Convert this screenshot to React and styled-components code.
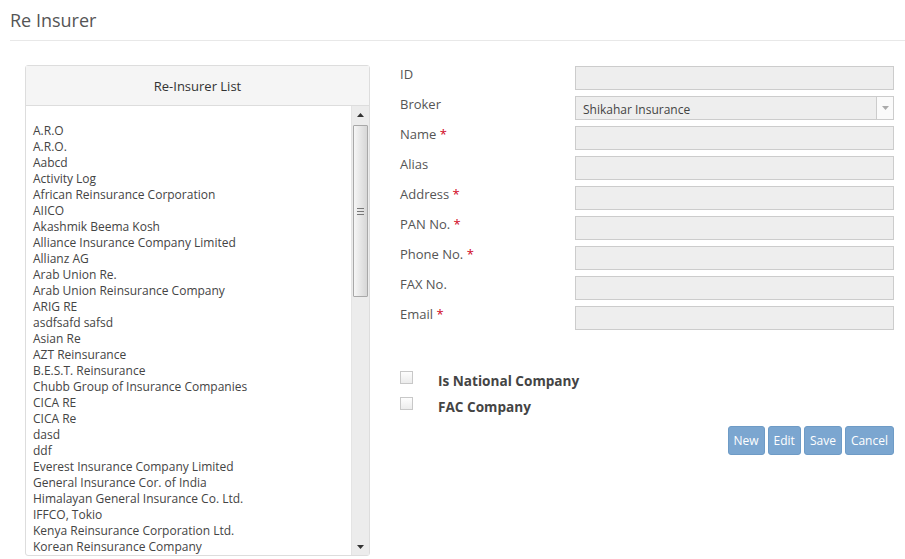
import styled, { createGlobalStyle } from "styled-components";

const GlobalStyle = createGlobalStyle`
  html, body {
    margin: 0;
    padding: 0;
    background: #fff;
  }
  body {
    font-family: "Open Sans", "Liberation Sans", sans-serif;
    color: #555;
  }
`;

const reinsurers = [
  "A.R.O",
  "A.R.O.",
  "Aabcd",
  "Activity Log",
  "African Reinsurance Corporation",
  "AIICO",
  "Akashmik Beema Kosh",
  "Alliance Insurance Company Limited",
  "Allianz AG",
  "Arab Union Re.",
  "Arab Union Reinsurance Company",
  "ARIG RE",
  "asdfsafd safsd",
  "Asian Re",
  "AZT Reinsurance",
  "B.E.S.T. Reinsurance",
  "Chubb Group of Insurance Companies",
  "CICA RE",
  "CICA Re",
  "dasd",
  "ddf",
  "Everest Insurance Company Limited",
  "General Insurance Cor. of India",
  "Himalayan General Insurance Co. Ltd.",
  "IFFCO, Tokio",
  "Kenya Reinsurance Corporation Ltd.",
  "Korean Reinsurance Company",
];

const fields = [
  { label: "ID" },
  { label: "Broker", select: "Shikahar Insurance" },
  { label: "Name", required: true },
  { label: "Alias" },
  { label: "Address", required: true },
  { label: "PAN No.", required: true },
  { label: "Phone No.", required: true },
  { label: "FAX No." },
  { label: "Email", required: true },
];

const Page = styled.div`
  width: 905px;
  height: 559px;
  overflow: hidden;
`;

const PageHeader = styled.div`
  margin-left: 10px;
  height: 41px;
  border-bottom: 1px solid #e8e8e8;
  box-sizing: border-box;
`;

const PageTitle = styled.h1`
  margin: 0;
  padding-top: 8px;
  font-size: 18px;
  font-weight: 400;
  line-height: 24px;
  color: #555;
`;

const Content = styled.div`
  display: flex;
  gap: 30px;
  padding: 24px 11px 0 25px;
`;

const Panel = styled.div`
  width: 345px;
  flex: none;
  border: 1px solid #ddd;
  border-radius: 3px;
  box-sizing: border-box;
`;

const PanelHeading = styled.div`
  height: 40px;
  background: #f5f5f5;
  border-bottom: 1px solid #ddd;
  box-sizing: border-box;
  display: flex;
  align-items: center;
  justify-content: center;
  font-size: 13px;
  color: #333;
`;

const ListBody = styled.div`
  display: flex;
  height: 449px;
`;

const ListItems = styled.ul`
  flex: 1;
  margin: 0;
  padding: 17px 0 0 7px;
  list-style: none;
  overflow: hidden;
`;

const ListItem = styled.li`
  font-size: 12px;
  line-height: 16px;
  height: 16px;
  color: #444;
  white-space: nowrap;
`;

const Scrollbar = styled.div`
  width: 17px;
  display: flex;
  flex-direction: column;
  background: #ececec;
  border-left: 1px solid #e4e4e4;
`;

const ScrollButton = styled.div`
  height: 17px;
  display: flex;
  align-items: center;
  justify-content: center;
  flex: none;
`;

const Track = styled.div`
  flex: 1;
  padding-top: 2px;
`;

const Thumb = styled.div`
  margin: 0 1px;
  height: 170px;
  border: 1px solid #a8a8a8;
  border-radius: 1px;
  background: linear-gradient(to right, #f6f6f6, #d6d6d6);
  display: flex;
  align-items: center;
  justify-content: center;
`;

const Grip = styled.div`
  width: 7px;
  height: 7px;
  background: repeating-linear-gradient(
    to bottom,
    #777 0px,
    #777 1px,
    transparent 1px,
    transparent 3px
  );
`;

const Form = styled.div`
  flex: 1;
  display: flex;
  flex-direction: column;
`;

const FieldRow = styled.div`
  display: grid;
  grid-template-columns: 175px 1fr;
  height: 30px;
  padding-top: 1px;
  box-sizing: border-box;
`;

const Label = styled.label`
  font-size: 13px;
  line-height: 17px;
  color: #555;
`;

const Required = styled.span`
  color: #d0021b;
`;

const Input = styled.div`
  height: 24px;
  box-sizing: border-box;
  border: 1px solid #ccc;
  background: #eee;
  display: flex;
  align-items: center;
  font-size: 12px;
  color: #444;
`;

const SelectValue = styled.span`
  flex: 1;
  padding: 2px 0 0 7px;
`;

const SelectArrow = styled.span`
  width: 16px;
  align-self: stretch;
  border-left: 1px solid #ccc;
  background: #fafafa;
  display: flex;
  align-items: center;
  justify-content: center;
`;

const Checks = styled.div`
  margin-top: 37px;
  display: flex;
  flex-direction: column;
  gap: 10px;
`;

const CheckRow = styled.div`
  display: flex;
  align-items: center;
  height: 16px;
`;

const Box = styled.span`
  width: 11px;
  height: 11px;
  border: 1px solid #c8c8c8;
  background: linear-gradient(#fdfdfd, #ececec);
  margin-right: 25px;
  margin-bottom: 5px;
`;

const CheckLabel = styled.span`
  font-size: 13.6px;
  font-weight: 700;
  color: #444;
`;

const Actions = styled.div`
  display: flex;
  justify-content: flex-end;
  gap: 3px;
  margin-top: 12px;
`;

const Button = styled.button`
  height: 29px;
  padding: 0 5px;
  border: 1px solid #6e9bc6;
  border-radius: 3px;
  background: #7ba6d0;
  color: #fff;
  font-family: "Open Sans", "Liberation Sans", sans-serif;
  font-size: 12px;
`;

const Triangle = ({ up, color = "#333" }) => (
  <svg width="7" height="4" viewBox="0 0 7 4">
    <path d={up ? "M0 4 L3.5 0 L7 4 Z" : "M0 0 L3.5 4 L7 0 Z"} fill={color} />
  </svg>
);

export default function App() {
  return (
    <Page>
      <GlobalStyle />
      <PageHeader>
        <PageTitle>Re Insurer</PageTitle>
      </PageHeader>
      <Content>
        <Panel>
          <PanelHeading>Re-Insurer List</PanelHeading>
          <ListBody>
            <ListItems>
              {reinsurers.map((r) => (
                <ListItem key={r}>{r}</ListItem>
              ))}
            </ListItems>
            <Scrollbar>
              <ScrollButton>
                <Triangle up />
              </ScrollButton>
              <Track>
                <Thumb>
                  <Grip />
                </Thumb>
              </Track>
              <ScrollButton>
                <Triangle />
              </ScrollButton>
            </Scrollbar>
          </ListBody>
        </Panel>
        <Form>
          {fields.map((f) => (
            <FieldRow key={f.label}>
              <Label>
                {f.label}
                {f.required && <Required> *</Required>}
              </Label>
              <Input>
                {f.select && (
                  <>
                    <SelectValue>{f.select}</SelectValue>
                    <SelectArrow>
                      <Triangle color="#aaa" />
                    </SelectArrow>
                  </>
                )}
              </Input>
            </FieldRow>
          ))}
          <Checks>
            <CheckRow>
              <Box />
              <CheckLabel>Is National Company</CheckLabel>
            </CheckRow>
            <CheckRow>
              <Box />
              <CheckLabel>FAC Company</CheckLabel>
            </CheckRow>
          </Checks>
          <Actions>
            <Button>New</Button>
            <Button>Edit</Button>
            <Button>Save</Button>
            <Button>Cancel</Button>
          </Actions>
        </Form>
      </Content>
    </Page>
  );
}
